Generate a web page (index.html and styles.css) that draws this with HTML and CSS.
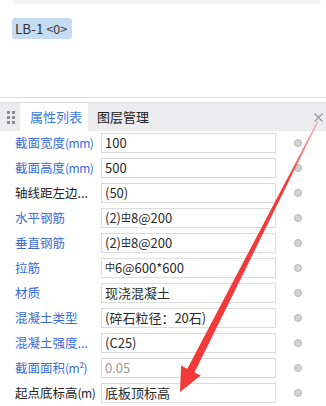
FILE: index.html
```html
<!DOCTYPE html>
<html>
<head>
<meta charset="utf-8">
<link rel="stylesheet" href="styles.css">
</head>
<body>
<div class="top-strip"></div>
<div class="badge-wrap"><span class="badge">LB-1 <span class="sm">&lt;0&gt;</span></span></div>
<div class="panel">
  <div class="tabbar">
    <div class="grip"><i></i><i></i><i></i><i></i><i></i><i></i></div>
    <div class="tab active">属性列表</div>
    <div class="tab">图层管理</div>
    <div class="close">
      <svg width="9" height="9" viewBox="0 0 9 9"><path d="M0.5 0.5L8.5 8.5M8.5 0.5L0.5 8.5" stroke="#9a9a9a" stroke-width="1.2"/></svg>
    </div>
  </div>
  <div class="rows">
    <div class="row"><div class="label blue">截面宽度<span class="la">(mm)</span></div><div class="value">100</div><div class="radio"></div></div>
    <div class="row"><div class="label blue">截面高度<span class="la">(mm)</span></div><div class="value">500</div><div class="radio"></div></div>
    <div class="row"><div class="label">轴线距左边...</div><div class="value">(50)</div><div class="radio"></div></div>
    <div class="row"><div class="label blue">水平钢筋</div><div class="value">(2)<span class="rb rb2">中</span>8@200</div><div class="radio"></div></div>
    <div class="row"><div class="label blue">垂直钢筋</div><div class="value">(2)<span class="rb rb2">中</span>8@200</div><div class="radio"></div></div>
    <div class="row"><div class="label blue">拉筋</div><div class="value"><span class="rb">中</span>6@600*600</div><div class="radio"></div></div>
    <div class="row"><div class="label blue">材质</div><div class="value">现浇混凝土</div><div class="radio"></div></div>
    <div class="row"><div class="label blue">混凝土类型</div><div class="value">(碎石粒径：20石)</div><div class="radio"></div></div>
    <div class="row"><div class="label blue">混凝土强度...</div><div class="value">(C25)</div><div class="radio"></div></div>
    <div class="row"><div class="label blue">截面面积<span class="la">(m²)</span></div><div class="value gray">0.05</div><div class="radio"></div></div>
    <div class="row"><div class="label">起点底标高<span class="la">(m)</span></div><div class="value">底板顶标高</div><div class="radio"></div></div>
  </div>
</div>
<svg class="arrow" width="326" height="406" viewBox="0 0 326 406">
  <defs>
    <linearGradient id="g" x1="318" y1="121" x2="190" y2="371" gradientUnits="userSpaceOnUse">
      <stop offset="0" stop-color="#ff6b6b" stop-opacity="0.6"/>
      <stop offset="0.25" stop-color="#f23a3a"/>
      <stop offset="1" stop-color="#f23a3a"/>
    </linearGradient>
  </defs>
  <polygon fill="url(#g)" points="318.4,121.2 317.6,120.8 187.3,368.8 181.1,365.6 180,392 200.7,375.6 194.5,372.4"/>
</svg>
</body>
</html>
```
FILE: styles.css
```css
* { box-sizing: border-box; }
body {
  margin: 0;
  width: 326px;
  height: 406px;
  overflow: hidden;
  background: #fff;
  font-family: "Noto Sans CJK SC", "Noto Sans", sans-serif;
  color: #333;
  position: relative;
}
.top-strip {
  margin: 0 5px 0 12px;
  height: 4px;
  background: #f2f2f2;
  border-radius: 0 0 7px 7px;
}
.badge-wrap {
  padding: 11px 0 0 12px;
  height: 93px;
}
.badge {
  display: inline-block;
  height: 21px;
  line-height: 21px;
  padding: 0 5px 0 3px;
  background: #c5dcf3;
  border-radius: 3px;
  font-size: 13.5px;
  color: #333;
}
.badge .sm { font-size: 12.5px; }
.panel {
  border-top: 1px solid #dcdcdc;
  padding-top: 4px;
}
.tabbar {
  display: flex;
  align-items: stretch;
  height: 29px;
  background: #ececee;
  border-top: 1px solid #dadada;
  position: relative;
}
.grip {
  width: 20px;
  flex: none;
  display: grid;
  grid-template-columns: 3px 3px;
  grid-template-rows: repeat(3, 3px);
  column-gap: 2px;
  row-gap: 2px;
  align-content: center;
  justify-content: center;
  padding-left: 2px;
}
.grip i {
  display: block;
  width: 3px;
  height: 3px;
  background: #8e8e8e;
}
.tab {
  flex: none;
  font-size: 13px;
  line-height: 28px;
  padding: 0 0 0 9px;
  color: #222;
  white-space: nowrap;
}
.tab.active {
  background: #fff;
  color: #3a7ae0;
  width: 68px;
  padding-left: 10px;
}
.close {
  position: absolute;
  right: 3px;
  top: 10px;
  width: 9px;
  height: 9px;
  display: flex;
}
.rows {
  display: flex;
  flex-direction: column;
  gap: 5px;
  padding-top: 2px;
}
.row {
  display: flex;
  align-items: center;
  height: 20px;
}
.label {
  flex: none;
  width: 101px;
  padding-left: 15px;
  font-size: 12.5px;
  line-height: 20px;
  white-space: nowrap;
  overflow: hidden;
  color: #222;
}
.label .la {
  letter-spacing: -0.5px;
  font-size: 12px;
}
.label.blue { color: #3a6ad8; }
.value {
  flex: none;
  width: 175px;
  height: 20px;
  border: 1px solid #dcdcdc;
  font-size: 13px;
  line-height: 18px;
  padding-left: 3px;
  color: #2a2a2a;
  white-space: nowrap;
  overflow: hidden;
}
.value.gray { color: #9a9a9a; }
.rb {
  font-size: 10px;
  display: inline-block;
  vertical-align: 2px;
  position: relative;
  line-height: 10px;
}
.rb2::after {
  content: "";
  position: absolute;
  left: 1px;
  right: 1px;
  bottom: 0;
  height: 1px;
  background: #2a2a2a;
}
.radio {
  flex: none;
  width: 8px;
  height: 8px;
  border-radius: 50%;
  background: #d4d4d6;
  border: 1px solid #b9b9bb;
  margin-left: 18px;
}
.arrow {
  position: absolute;
  left: 0;
  top: 0;
  pointer-events: none;
}
```
